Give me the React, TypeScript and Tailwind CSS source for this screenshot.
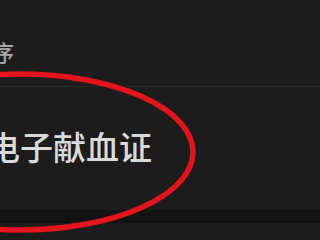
export default function App() {
    return (
        <div className="relative w-[320px] h-[240px] overflow-hidden bg-[#1c1c1c]" style={{ fontFamily: '"Noto Sans CJK SC", "Noto Sans", sans-serif' }}>
            {/* section header */}
            <div className="h-[86px] pt-[40px]">
                <p className="ml-[-30px] text-[22px] leading-[22px] font-medium text-[#a8a8a8] whitespace-nowrap">排序</p>
            </div>
            <div className="h-px bg-[#2b2b2b]" />

            {/* list row */}
            <div className="h-[123px] pt-[43px]">
                <p className="ml-[-13px] text-[33px] leading-[33px] font-medium text-[#dadada] whitespace-nowrap">电子献血证</p>
            </div>
            <div className="h-[13px] bg-gradient-to-b from-[#141414] to-[#111111]" />

            {/* hand-drawn red circle over the row */}
            <svg className="absolute inset-0 pointer-events-none" width="320" height="240" viewBox="0 0 320 240">
                <ellipse cx="20" cy="152" rx="173" ry="78" fill="none" stroke="#e3141b" strokeWidth="5.5" />
            </svg>
        </div>
    )
}
